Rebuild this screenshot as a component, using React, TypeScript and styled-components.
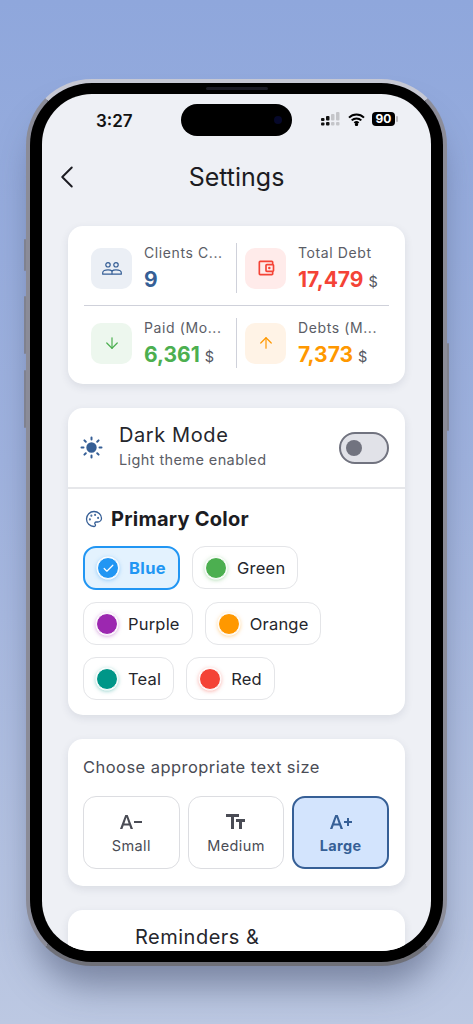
import { ReactNode } from 'react';
import styled, { createGlobalStyle } from 'styled-components';
import { ArrowDown, ArrowUp, Check, ChevronLeft, Palette } from 'lucide-react';
import { MdFormatSize, MdOutlineAccountBalanceWallet, MdTextDecrease, MdTextIncrease } from 'react-icons/md';

const GlobalStyle = createGlobalStyle`
    html, body {
        margin: 0;
        padding: 0;
    }
    body {
        font-family: 'Inter', 'Liberation Sans', sans-serif;
        color: #1c1c22;
    }
`

const Stage = styled.div`
    box-sizing: border-box;
    width: 473px;
    height: 1024px;
    overflow: hidden;
    padding: 79px 26px 0;
    background: linear-gradient(180deg, #8fa7dc 0%, #9fb2de 45%, #bcc8e2 100%);
`

const Phone = styled.div`
    position: relative;
    box-sizing: border-box;
    width: 421px;
    height: 887px;
    padding: 14px 15px;
    border-radius: 66px;
    background: #000;
    border: 4px solid #8b8c98;
    border-top-color: #c6c8d4;
    border-bottom-color: #6f7078;
    box-shadow: 0 28px 34px -8px rgba(60, 70, 100, 0.5);
    display: flex;
`

const SideButton = styled.span<{ $top: number; $height: number; $right?: boolean }>`
    position: absolute;
    top: ${p => p.$top}px;
    height: ${p => p.$height}px;
    width: 2px;
    ${p => (p.$right ? 'right: -6px;' : 'left: -6px;')}
    background: #80828f;
    border-radius: 1px;
`

const Speaker = styled.span`
    position: absolute;
    top: 4px;
    left: 50%;
    margin-left: -31px;
    width: 62px;
    height: 3px;
    border-radius: 2px;
    background: #1a1a24;
`

const Screen = styled.div`
    flex: 1;
    margin: -3px -3px;
    border-radius: 50px;
    background: #eef0f5;
    overflow: hidden;
    display: flex;
    flex-direction: column;
`

const StatusBar = styled.div`
    box-sizing: border-box;
    flex: none;
    height: 52px;
    padding-top: 10px;
    display: grid;
    grid-template-columns: 1fr auto 1fr;
    align-items: start;
`

const Time = styled.span`
    margin: 7px 0 0 54px;
    font-size: 17px;
    line-height: 20px;
    font-weight: 600;
    color: #111;
`

const Island = styled.span`
    position: relative;
    width: 111px;
    height: 32px;
    border-radius: 16px;
    background: #000;
`

const Lens = styled.span`
    position: absolute;
    right: 10px;
    top: 12px;
    width: 8px;
    height: 8px;
    border-radius: 50%;
    background: #06082a;
`

const StatusIcons = styled.div`
    margin-top: 8px;
    padding-right: 36px;
    display: flex;
    align-items: center;
    justify-content: flex-end;
    gap: 7px;
`

const Battery = styled.span`
    position: relative;
    width: 23px;
    height: 14px;
    border-radius: 4px;
    background: #000;
    color: #fff;
    font-size: 12px;
    line-height: 14px;
    font-weight: 700;
    text-align: center;
    &::after {
        content: '';
        position: absolute;
        right: -3px;
        top: 4px;
        width: 2px;
        height: 6px;
        border-radius: 1px;
        background: #b9b9bd;
    }
`

const Header = styled.header`
    flex: none;
    position: relative;
    height: 62px;
    display: flex;
    align-items: center;
    justify-content: center;
`

const BackButton = styled.span`
    position: absolute;
    left: 6px;
    top: 12px;
    display: flex;
    color: #1c1c22;
`

const Heading = styled.h1`
    margin: 0;
    font-size: 25px;
    line-height: 32px;
    font-weight: 400;
    color: #1c1c22;
`

const Content = styled.main`
    flex: 1;
    min-height: 0;
    overflow: hidden;
    padding: 18px 26px 0;
    display: flex;
    flex-direction: column;
    gap: 24px;
`

const Card = styled.section`
    flex: none;
    background: #fff;
    border-radius: 15px;
    box-shadow: 0 3px 8px rgba(40, 50, 80, 0.1);
`

const StatsCard = styled(Card)`
    padding: 17px 16px 16px;
`

const StatsRow = styled.div`
    display: grid;
    grid-template-columns: 152px 1fr;
`

const RowRule = styled.hr`
    margin: 12px 0 12px;
    border: 0;
    height: 1px;
    background: #cfd1da;
`

const Stat = styled.div<{ $split?: boolean }>`
    height: 50px;
    display: flex;
    align-items: center;
    gap: 12px;
    padding-left: ${p => (p.$split ? '8px' : '7px')};
    min-width: 0;
    ${p => p.$split && 'border-left: 1px solid #cfd1da;'}
`

const StatIcon = styled.span<{ $bg: string; $color: string }>`
    flex: none;
    width: 41px;
    height: 41px;
    border-radius: 10px;
    background: ${p => p.$bg};
    color: ${p => p.$color};
    display: flex;
    align-items: center;
    justify-content: center;
`

const StatBody = styled.div`
    min-width: 0;
    flex: 1;
`

const StatLabel = styled.div`
    font-size: 14px;
    line-height: 18px;
    letter-spacing: 0.6px;
    color: #5b5d66;
    white-space: nowrap;
`

const StatValue = styled.div`
    margin-top: 6px;
    display: flex;
    align-items: baseline;
    gap: 5px;
`

const Amount = styled.span<{ $color: string }>`
    font-size: 21px;
    line-height: 24px;
    font-weight: 700;
    color: ${p => p.$color};
`

const Unit = styled.span`
    font-size: 14.5px;
    color: #55575f;
`

const ThemeRow = styled.div`
    height: 79px;
    padding: 0 16px 0 12px;
    display: flex;
    align-items: center;
    border-bottom: 2px solid #e6e7ea;
`

const SunIcon = styled.span`
    display: flex;
    color: #365f96;
    margin-right: 16px;
`

const ThemeText = styled.div`
    flex: 1;
    padding-bottom: 4px;
`

const ThemeTitle = styled.div`
    font-size: 20px;
    line-height: 25px;
    letter-spacing: 0.6px;
    color: #25262c;
`

const ThemeHint = styled.div`
    margin-top: 3px;
    font-size: 14.5px;
    line-height: 18px;
    letter-spacing: 0.4px;
    color: #5b5d66;
`

const Toggle = styled.span`
    box-sizing: border-box;
    width: 50px;
    height: 32px;
    border-radius: 16px;
    border: 2px solid #71737f;
    background: #e1e2e8;
    display: flex;
    align-items: center;
    padding-left: 5px;
    &::before {
        content: '';
        width: 16px;
        height: 16px;
        border-radius: 50%;
        background: #71737f;
    }
`

const ColorSection = styled.div`
    padding: 17px 16px 15px 15px;
`

const SectionTitle = styled.div`
    display: flex;
    align-items: center;
    gap: 8px;
    font-size: 20px;
    line-height: 26px;
    font-weight: 700;
    color: #1c1c22;
    letter-spacing: 0.25px;
    svg {
        color: #365f96;
        margin-left: 2px;
    }
`

const Chips = styled.div`
    margin-top: 14px;
    display: flex;
    flex-wrap: wrap;
    gap: 12px;
`

const Chip = styled.div<{ $active?: boolean }>`
    box-sizing: border-box;
    height: ${p => (p.$active ? '44px' : '43px')};
    padding: 0 12px;
    display: flex;
    align-items: center;
    gap: 10px;
    border-radius: 13px;
    border: ${p => (p.$active ? '2px solid #2196f3' : '1px solid #e4e5e8')};
    background: ${p => (p.$active ? '#e3f2fe' : '#fff')};
    color: ${p => (p.$active ? '#2196f3' : '#25262c')};
    font-size: 16.5px;
    font-weight: ${p => (p.$active ? 700 : 400)};
    letter-spacing: ${p => (p.$active ? '0.4px' : '0.2px')};
`

const Swatch = styled.span<{ $color: string }>`
    flex: none;
    width: 20px;
    height: 20px;
    border-radius: 50%;
    background: ${p => p.$color};
    border: 1px solid #fff;
    box-shadow: 0 0 0 0.5px #fff, 0 1px 4px ${p => p.$color}80;
    color: #fff;
    display: flex;
    align-items: center;
    justify-content: center;
`

const SizeCard = styled(Card)`
    padding: 18px 16px 17px 15px;
`

const SizeLabel = styled.div`
    font-size: 16.5px;
    line-height: 21px;
    letter-spacing: 0.45px;
    color: #4a4c55;
`

const SizeOptions = styled.div`
    margin-top: 18px;
    display: grid;
    grid-template-columns: repeat(3, 1fr);
    gap: 8px;
`

const SizeOption = styled.div<{ $active?: boolean }>`
    box-sizing: border-box;
    height: 73px;
    border-radius: 13px;
    border: ${p => (p.$active ? '2px solid #365f96' : '1px solid #dcdde1')};
    background: ${p => (p.$active ? '#d3e4fd' : '#fff')};
    color: ${p => (p.$active ? '#365f96' : '#4a4c55')};
    display: flex;
    flex-direction: column;
    align-items: center;
    justify-content: center;
    gap: 3px;
    font-size: 14.5px;
    line-height: 18px;
    letter-spacing: 0.4px;
    font-weight: ${p => (p.$active ? 700 : 400)};
`

const MirroredSize = styled(MdFormatSize)`
    transform: scaleX(-1);
`

const ReminderCard = styled(Card)`
    padding: 15px 16px 40px 67px;
    font-size: 20px;
    line-height: 25px;
    letter-spacing: 0.5px;
    color: #25262c;
`

const SignalBars = () => (
    <svg width="20" height="14" viewBox="0 0 20 14">
        <rect x="0" y="6" width="3.5" height="3" rx="1" fill="#111" />
        <rect x="0" y="10.5" width="3.5" height="3" rx="1" fill="#111" />
        <rect x="5" y="4" width="3.5" height="4.5" rx="1" fill="#111" />
        <rect x="5" y="10" width="3.5" height="3.5" rx="1" fill="#111" />
        <rect x="10" y="2" width="3.5" height="6.5" rx="1" fill="#c4c5c9" />
        <rect x="10" y="10" width="3.5" height="3.5" rx="1" fill="#c4c5c9" />
        <rect x="15" y="0" width="3.5" height="8.5" rx="1" fill="#c4c5c9" />
        <rect x="15" y="10" width="3.5" height="3.5" rx="1" fill="#c4c5c9" />
    </svg>
)

const WifiIcon = () => (
    <svg width="17" height="13" viewBox="0 0 17 13" fill="none" stroke="#000" strokeWidth="2" strokeLinecap="butt">
        <path d="M1 4.6a10.6 10.6 0 0 1 15 0" />
        <path d="M3.7 7.4a6.8 6.8 0 0 1 9.6 0" />
        <path d="M6.4 10a3 3 0 0 1 4.2 0" />
        <circle cx="8.5" cy="11.4" r="0.7" fill="#000" />
    </svg>
)

const PeopleIcon = () => (
    <svg width="20" height="13" viewBox="0 0 20 13" fill="none" stroke="currentColor" strokeWidth="1.2" strokeLinejoin="round">
        <circle cx="6" cy="2.8" r="2.2" />
        <circle cx="14" cy="2.8" r="2.2" />
        <path d="M0.7 12.2v-1.4c0-2 2.4-3 5.3-3 1.8 0 3.2.4 4 1.2.8-.8 2.2-1.2 4-1.2 2.9 0 5.3 1 5.3 3v1.4z" />
        <path d="M10 9v3.2" />
    </svg>
)

const SunGlyph = () => (
    <svg width="23" height="23" viewBox="0 0 23 23" fill="currentColor" stroke="currentColor" strokeWidth="2" strokeLinecap="round">
        <circle cx="11.5" cy="11.5" r="4.2" />
        <path d="M11.5 1.5v2M11.5 19.5v2M1.5 11.5h2M19.5 11.5h2M4.4 4.4l1.4 1.4M17.2 17.2l1.4 1.4M4.4 18.6l1.4-1.4M17.2 5.8l1.4-1.4" />
    </svg>
)

type StatItemProps = {
    icon: ReactNode
    bg: string
    color: string
    label: string
    amount: string
    unit?: boolean
    split?: boolean
}

const StatItem = ({ icon, bg, color, label, amount, unit, split }: StatItemProps) => (
    <Stat $split={split}>
        <StatIcon $bg={bg} $color={color}>{icon}</StatIcon>
        <StatBody>
            <StatLabel>{label}</StatLabel>
            <StatValue>
                <Amount $color={color}>{amount}</Amount>
                {unit && <Unit>$</Unit>}
            </StatValue>
        </StatBody>
    </Stat>
)

const colors = [
    { name: 'Blue', color: '#2196f3', active: true },
    { name: 'Green', color: '#4caf50' },
    { name: 'Purple', color: '#9c27b0' },
    { name: 'Orange', color: '#ff9800' },
    { name: 'Teal', color: '#009688' },
    { name: 'Red', color: '#f44336' },
]

export default function App() {
    return (
        <Stage>
            <GlobalStyle />
            <Phone>
                <SideButton $top={156} $height={32} />
                <SideButton $top={213} $height={58} />
                <SideButton $top={287} $height={58} />
                <SideButton $right $top={260} $height={88} />
                <Speaker />
                <Screen>
                    <StatusBar>
                        <Time>3:27</Time>
                        <Island><Lens /></Island>
                        <StatusIcons>
                            <SignalBars />
                            <WifiIcon />
                            <Battery>90</Battery>
                        </StatusIcons>
                    </StatusBar>
                    <Header>
                        <BackButton><ChevronLeft size={38} strokeWidth={1.25} /></BackButton>
                        <Heading>Settings</Heading>
                    </Header>
                    <Content>
                        <StatsCard>
                            <StatsRow>
                                <StatItem icon={<PeopleIcon />} bg="#ebeff5" color="#365f96" label="Clients C..." amount="9" />
                                <StatItem split icon={<MdOutlineAccountBalanceWallet size={20} />} bg="#ffebea" color="#f44336" label="Total Debt" amount="17,479" unit />
                            </StatsRow>
                            <RowRule />
                            <StatsRow>
                                <StatItem icon={<ArrowDown size={18} strokeWidth={1.6} />} bg="#edf7ee" color="#4caf50" label="Paid (Mo..." amount="6,361" unit />
                                <StatItem split icon={<ArrowUp size={18} strokeWidth={1.6} />} bg="#fff3e6" color="#ff9800" label="Debts (M..." amount="7,373" unit />
                            </StatsRow>
                        </StatsCard>
                        <Card>
                            <ThemeRow>
                                <SunIcon><SunGlyph /></SunIcon>
                                <ThemeText>
                                    <ThemeTitle>Dark Mode</ThemeTitle>
                                    <ThemeHint>Light theme enabled</ThemeHint>
                                </ThemeText>
                                <Toggle />
                            </ThemeRow>
                            <ColorSection>
                                <SectionTitle>
                                    <Palette size={18} strokeWidth={1.7} />
                                    Primary Color
                                </SectionTitle>
                                <Chips>
                                    {colors.map(c => (
                                        <Chip key={c.name} $active={c.active}>
                                            <Swatch $color={c.color}>
                                                {c.active && <Check size={13} strokeWidth={2.2} />}
                                            </Swatch>
                                            {c.name}
                                        </Chip>
                                    ))}
                                </Chips>
                            </ColorSection>
                        </Card>
                        <SizeCard>
                            <SizeLabel>Choose appropriate text size</SizeLabel>
                            <SizeOptions>
                                <SizeOption><MdTextDecrease size={24} />Small</SizeOption>
                                <SizeOption><MirroredSize size={24} />Medium</SizeOption>
                                <SizeOption $active><MdTextIncrease size={24} />Large</SizeOption>
                            </SizeOptions>
                        </SizeCard>
                        <ReminderCard>Reminders &amp;</ReminderCard>
                    </Content>
                </Screen>
            </Phone>
        </Stage>
    )
}
